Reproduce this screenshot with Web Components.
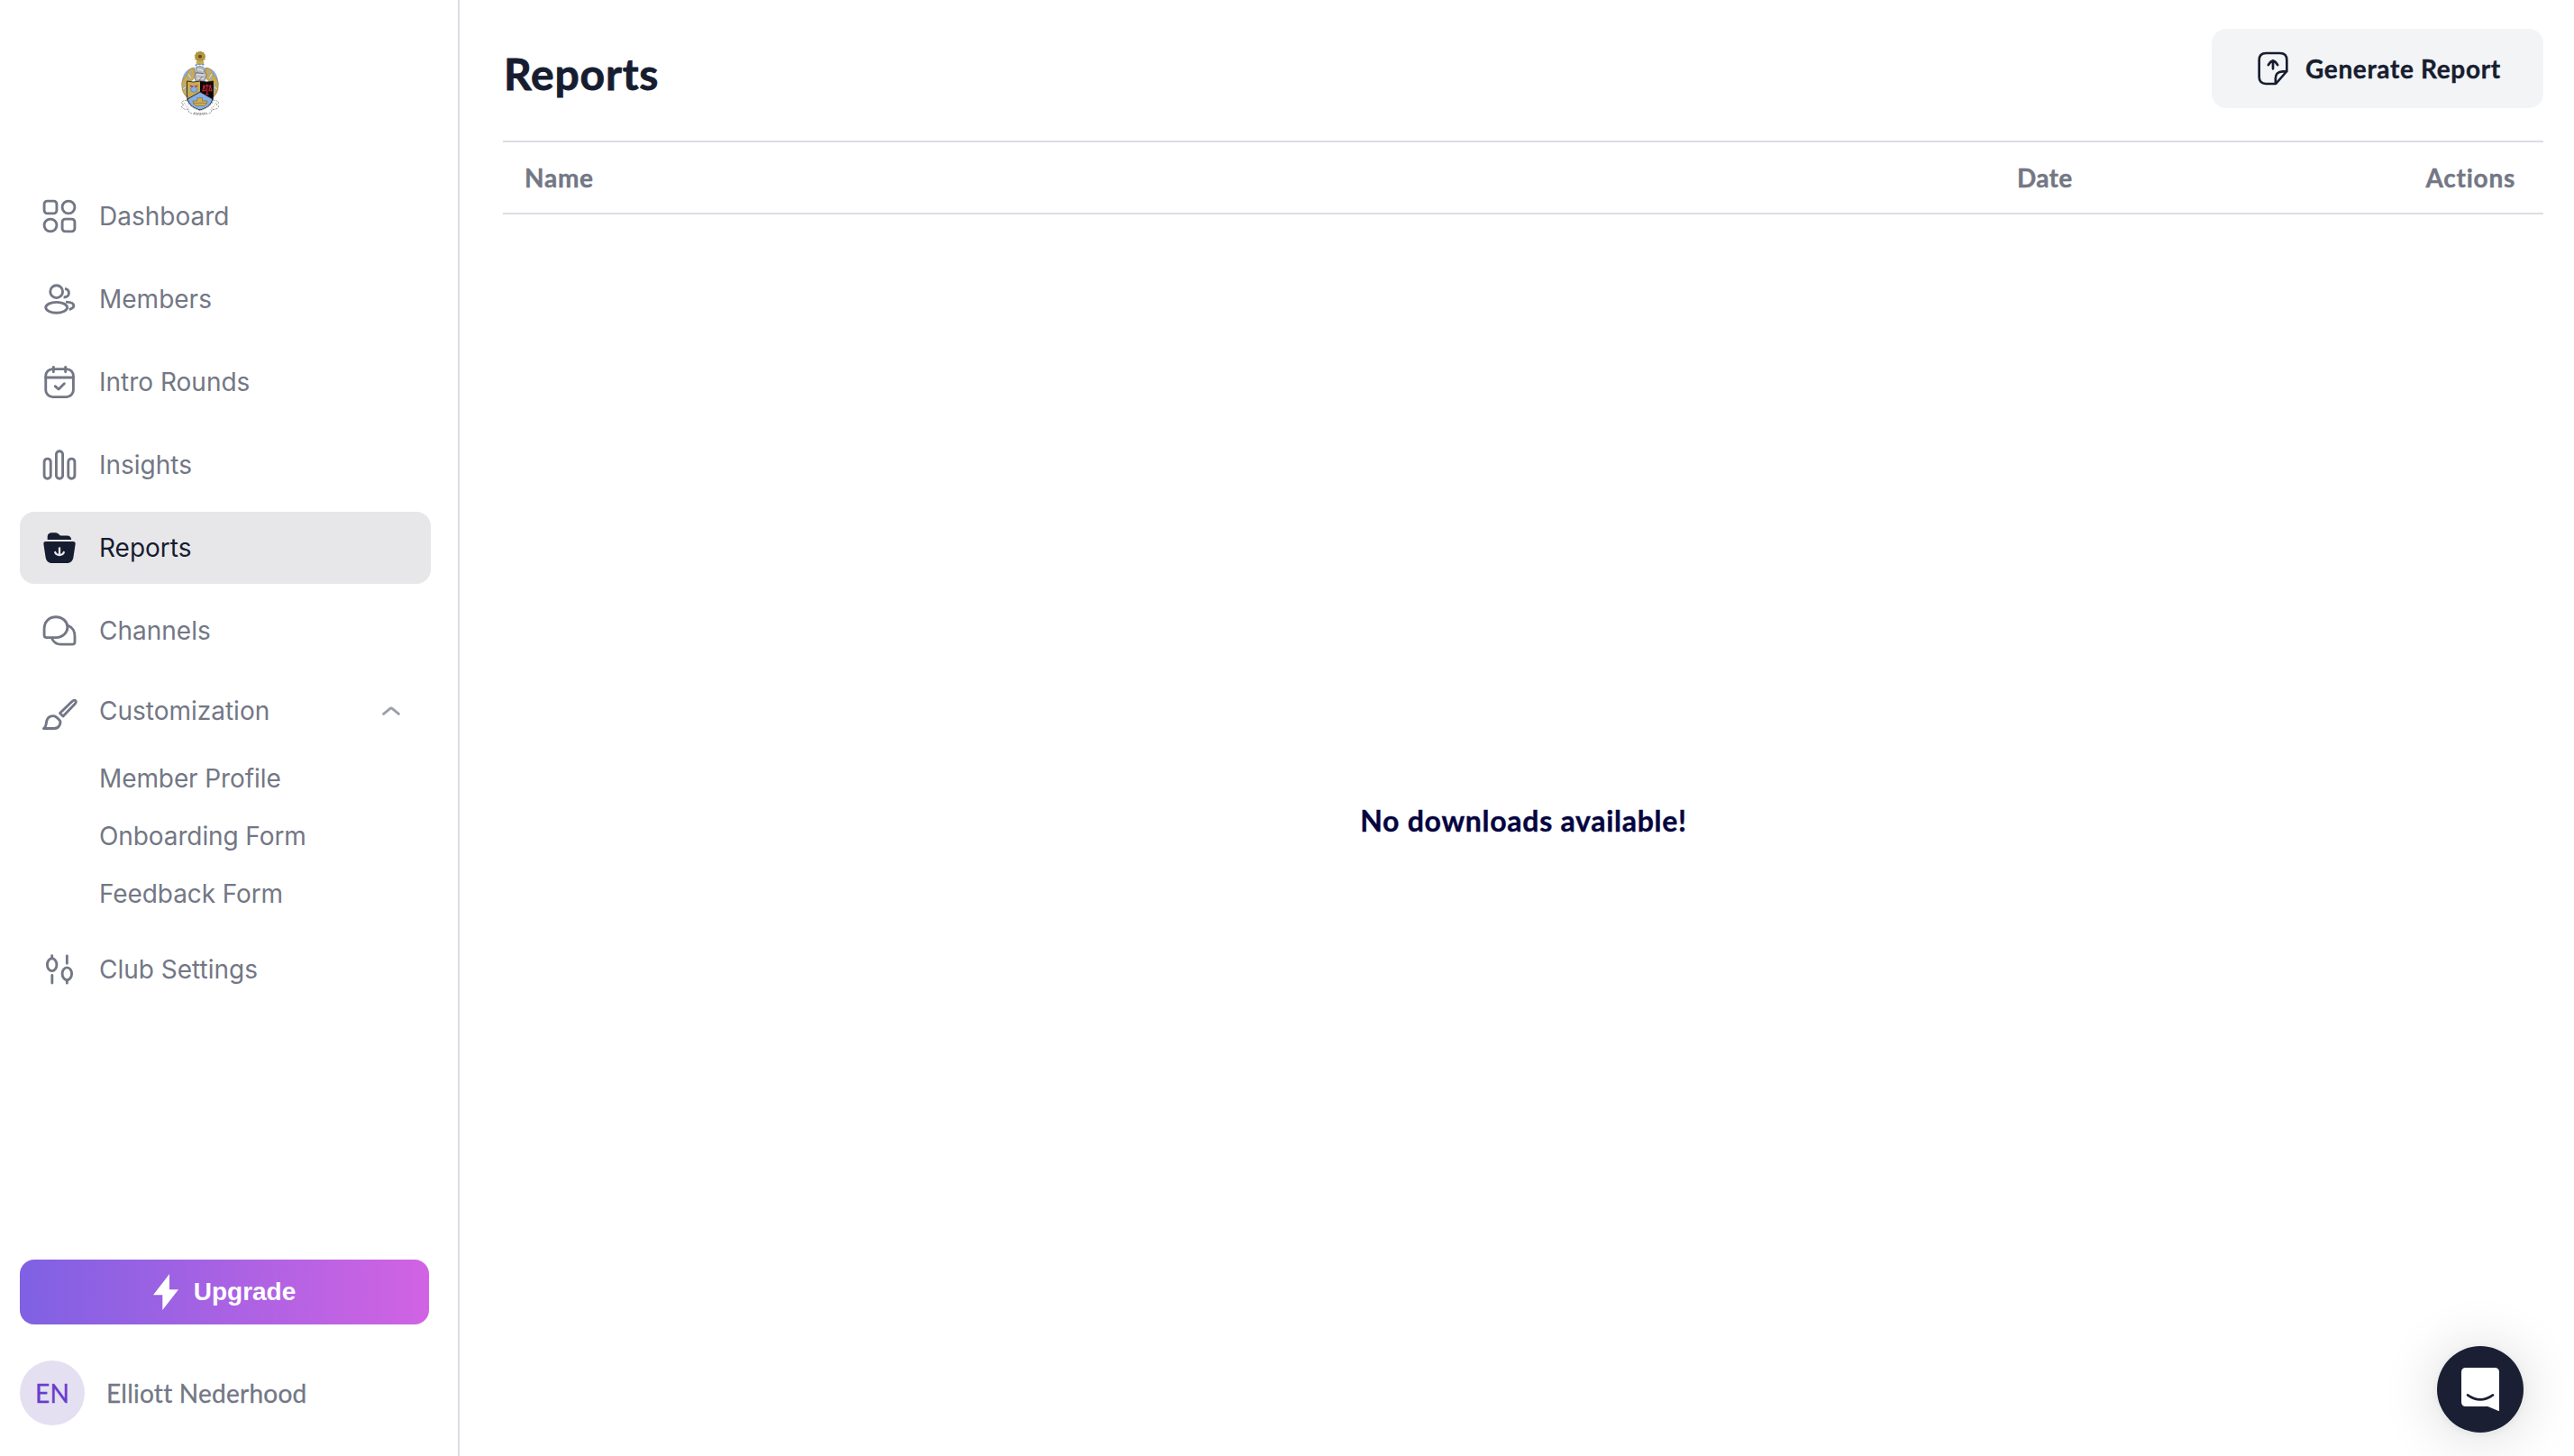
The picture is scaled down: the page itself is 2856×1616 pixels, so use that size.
<!DOCTYPE html>
<html lang="en">
<head>
<meta charset="utf-8">
<title>Reports</title>
<style>
  html, body { margin: 0; height: 100%; background: #fff; }
  body { font-family: Inter, sans-serif; font-size: 28px; color: #737785; overflow: hidden; }
</style>
</head>
<body>
<app-shell>
  <side-bar slot="sidebar">
    <club-crest slot="logo"></club-crest>
    <nav-item icon="dashboard">Dashboard</nav-item>
    <nav-item icon="members">Members</nav-item>
    <nav-item icon="calendar">Intro Rounds</nav-item>
    <nav-item icon="insights">Insights</nav-item>
    <nav-item icon="reports" active>Reports</nav-item>
    <nav-item icon="channels">Channels</nav-item>
    <nav-group icon="brush" label="Customization">
      <sub-item>Member Profile</sub-item>
      <sub-item>Onboarding Form</sub-item>
      <sub-item>Feedback Form</sub-item>
    </nav-group>
    <nav-item icon="settings">Club Settings</nav-item>
    <upgrade-button slot="footer">Upgrade</upgrade-button>
    <user-chip slot="footer" initials="EN">Elliott Nederhood</user-chip>
  </side-bar>
  <page-header slot="main" heading="Reports">
    <action-button>Generate Report</action-button>
  </page-header>
  <report-table slot="main">No downloads available!</report-table>
</app-shell>
<chat-launcher></chat-launcher>

<script>
const define = (name, html, setup) => {
  const tpl = document.createElement('template');
  tpl.innerHTML = html;
  customElements.define(name, class extends HTMLElement {
    constructor() {
      super();
      this.attachShadow({ mode: 'open' }).append(tpl.content.cloneNode(true));
    }
    connectedCallback() { if (setup) setup(this, this.shadowRoot); }
  });
};

const ICONS = {
  dashboard: `<rect x="1.85" y="1.85" width="8.3" height="8.3" rx="2"/><circle cx="18" cy="6" r="4.15"/><circle cx="6" cy="18" r="4.15"/><rect x="13.85" y="13.85" width="8.3" height="8.3" rx="2"/>`,
  members: `<circle cx="10" cy="7" r="4.15"/><ellipse cx="10" cy="17.6" rx="7.15" ry="3.55"/><path stroke-linecap="butt" d="M15.6 5c1.7.3 2.65 1.5 2.65 3s-1.2 2.8-3.5 2.8M16.2 13.9c3.2.1 5.3 1 5.3 2.4 0 1.1-1 1.9-3 2.7"/>`,
  calendar: `<rect x="2.85" y="3.35" width="18.4" height="18.6" rx="4.6"/><path d="M8 2v3.3M16 2v3.3M2.85 9h18.4M9.1 14.8l2.3 2 3.8-3.8"/>`,
  insights: `<rect x="1.85" y="7.85" width="4.3" height="13.3" rx="2.15"/><rect x="9.85" y="2.85" width="4.3" height="18.3" rx="2.15"/><rect x="17.85" y="7.85" width="4.3" height="13.3" rx="2.15"/>`,
  reports: `<path fill="currentColor" stroke="none" d="M4 6.6V4.6C4 2.9 5.1 1.9 6.9 1.9h2.3c1.2 0 1.9.4 2.6 1.2.5.6.8.8 1.6.8h3.7c1.7 0 2.7 1 2.8 2.7ZM2.9 7.8h18.2c1 0 1.6.6 1.5 1.6l-1.3 8.6c-.4 2.8-1.9 4.2-4.4 4.2H7.1c-2.5 0-4-1.4-4.4-4.2L1.4 9.4c-.1-1 .5-1.6 1.5-1.6Z"/><path stroke="#e7e7e9" stroke-width="1.4" d="M12 12.2v4.6M9.1 15c.4 1.2 1.5 1.8 2.9 1.8s2.5-.6 2.9-1.8"/>`,
  channels: `<path d="M1.85 10.7c0-4.6 3.1-7.85 7.8-7.85 4.4 0 7.7 3.2 7.7 6.8s-3.1 6.9-7.6 6.9H3.4c-.9 0-1.55-.7-1.55-1.6ZM18 8.7c2.6 1.1 4.2 3.6 4.2 7.2v3.6c0 .9-.7 1.6-1.6 1.6h-7.8c-2.5 0-4.7-1.4-5.9-4"/>`,
  brush: `<path d="M12.3 11.1l7.9-7.6c1-.9 2-1.2 2.5-.7.5.5.2 1.5-.7 2.5l-7.6 7.9ZM1.4 21.3c1.4-.5 1.6-2 1.8-3.6.3-2.6 1.3-4.2 3.3-4.6 1-.2 2.2-.2 3 .4.9.6 1.9 1.5 2.7 2.5.9 1.1-.1 5.3-3.6 5.3Z"/>`,
  settings: `<ellipse cx="7" cy="8.8" rx="3.15" ry="4.15"/><path d="M7 2.8v1.5M7.1 15.9v5.1M17 2.9v5.1M17 19.3v1.8"/><ellipse cx="17" cy="14.9" rx="3.15" ry="4.15"/>`,
  generate: `<path stroke-width="1.6" d="M13.9 22.2H7.3c-3 0-4.5-1.8-4.5-4.5V6.3C2.8 3.5 4.3 1.8 7.3 1.8h9.4c3 0 4.5 1.8 4.5 4.5v7.5ZM21.2 14h-2.9c-3 0-4.6 1.9-4.6 4.6v3.6M12 12.2V7M8.9 9.7c.9-1.6 1.9-2.6 3.1-2.9 1.2.3 2.2 1.3 3.1 2.9"/>`
};

define('ui-icon', `
  <style>
    :host { display: block; flex: none; width: 40px; height: 40px; }
    svg { display: block; width: 100%; height: 100%; fill: none; stroke: currentColor; stroke-width: 1.72; stroke-linecap: round; stroke-linejoin: round; overflow: visible; }
  </style>
  <svg viewBox="0 0 24 24"></svg>`,
  (el, root) => { root.querySelector('svg').innerHTML = ICONS[el.getAttribute('name')] || ''; });

define('club-crest', `
  <style>
    :host { display: block; width: 46px; height: 73.33px; }
    svg { display: block; width: 100%; height: 100%; }
  </style>
  <svg viewBox="60 45 130 220" preserveAspectRatio="none">
    <path fill="#e8ddb4" d="M116 84l-10-6 5-7-6-6 7-5-1-8 8 1 6-5 6 5 8-1-1 8 7 5-6 6 5 7-10 6z"/>
    <circle cx="125" cy="68" r="15" fill="#b59a3c" stroke="#7d6a2a" stroke-width="3" stroke-dasharray="4 3"/>
    <circle cx="125" cy="68" r="6" fill="#5f4f1e"/>
    <path fill="#86aee9" d="M108 104c-22 2-38 20-40 48-1 20 3 38 14 52l10 4V150l22-20zM142 104c22 2 38 20 40 48 1 20-3 38-14 52l-10 4V150l-22-20z"/>
    <g fill="#c9ab55" stroke="#8d7a3c" stroke-width="1.5">
      <path d="M106 106c-18 4-22 12-22 24-12 8-18 22-16 36 0 16 6 30 16 36l4-14c-8-10-6-22 2-32 6-8 14-8 20-22z"/>
      <path d="M144 106c18 4 22 12 22 24 12 8 18 22 16 36 0 16-6 30-16 36l-4-14c8-10 6-22-2-32-6-8-14-8-20-22z"/>
    </g>
    <path fill="none" stroke="#86aee9" stroke-width="3" d="M96 116c-2 12 0 20-8 30M154 116c2 12 0 20 8 30M76 158c0 12 2 20 8 28M174 158c0 12-2 20-8 28"/>
    <path fill="none" stroke="#fff" stroke-width="2" d="M88 126l8 14M162 126l-8 14M72 176l8-6M178 176l-8-6"/>
    <path fill="#c9ab55" d="M113 84h24v12h-24z"/>
    <path fill="none" stroke="#5c8fe0" stroke-width="5" stroke-dasharray="6 5" d="M110 98q15-8 32 0"/>
    <path fill="#b7b9bd" stroke="#66686e" stroke-width="2" d="M112 104q16-8 28 4l-2 12 8 8-6 20-14 6-16-6-2-18 6-10z"/>
    <path fill="none" stroke="#efeff1" stroke-width="3" d="M116 112q12-3 18 6M114 128l24 2M116 140l20 2"/>
    <path fill="none" stroke="#4c4e55" stroke-width="2" d="M112 122l24 3M122 148l10-14"/>
    <path fill="#c9ab55" d="M84 150q20 6 41 0v38l-41 24z"/>
    <path fill="#0a0809" d="M125 150q21 6 41 0v62l-41-26z"/>
    <path fill="#86aee9" d="M125 186l41 24q-6 24-41 36-35-12-41-36z"/>
    <path fill="none" stroke="#16140f" stroke-width="2.5" d="M84 150q20 6 41 0 21 6 41 0v42c0 34-16 46-41 54-25-8-41-20-41-54zM84 211l41-25 41 25"/>
    <circle cx="106" cy="177" r="10" fill="#86aee9" stroke="#5279bc" stroke-width="2"/>
    <path stroke="#c22334" stroke-width="4" d="M94 165l8 4M117 165l-8 4"/>
    <path fill="none" stroke="#cf2338" stroke-width="3" d="M134 166h27M147 160v36M137 166l-4 16h9zM157 166l-4 16h9zM142 194h10"/>
    <path fill="#d2b04d" stroke="#6c5a22" stroke-width="1.5" d="M102 216h14v-10h16v10h16q-2 14-10 16h-26q-8-2-10-16z"/>
    <path stroke="#6c5a22" stroke-width="1.5" d="M104 223h42"/>
    <path fill="#fff" stroke="#6f6f73" stroke-width="2" stroke-dasharray="7 3" d="M84 214q-14 0-18 8l8 6-8 6q6 12 22 10l2 10q14 8 35 8t35-8l2-10q16 2 22-10l-8-6 8-6q-4-8-18-8-4 22-41 34-37-12-41-34z"/>
    <path fill="none" stroke="#55565a" stroke-width="4" stroke-dasharray="3 3" d="M106 256q19 4 38 0"/>
    <path fill="none" stroke="#a9a9ad" stroke-width="3" stroke-dasharray="3 4" d="M76 222q4 14 18 22M174 222q-4 14-18 22"/>
  </svg>`);

define('app-shell', `
  <style>
    :host { display: flex; height: 100vh; }
    main { flex: 1; min-width: 0; display: flex; flex-direction: column; padding: 0 34px 32px 48px; box-sizing: border-box; }
  </style>
  <slot name="sidebar"></slot>
  <main><slot name="main"></slot></main>`);

define('side-bar', `
  <style>
    :host { display: flex; flex-direction: column; flex: none; width: 510px; height: 100%; box-sizing: border-box; border-right: 2px solid #dcdce4; padding: 0 30px 34px 22px; }
    header { height: 200px; box-sizing: border-box; padding: 55px 0 0 176.5px; }
    nav { flex: 1; display: flex; flex-direction: column; gap: 12px; }
    footer { display: flex; flex-direction: column; gap: 40px; }
  </style>
  <header><slot name="logo"></slot></header>
  <nav><slot></slot></nav>
  <footer><slot name="footer"></slot></footer>`);

define('nav-item', `
  <style>
    :host { display: flex; align-items: center; gap: 24px; height: 80px; box-sizing: border-box; padding: 0 24px; border-radius: 16px; line-height: 40px; }
    :host([active]) { background: #e7e7e9; color: #171d30; }
  </style>
  <ui-icon></ui-icon><span><slot></slot></span>`,
  (el, root) => {
    const old = root.querySelector('ui-icon');
    const icon = document.createElement('ui-icon');
    icon.setAttribute('name', el.getAttribute('icon'));
    old.replaceWith(icon);
  });

define('nav-group', `
  <style>
    :host { display: block; margin-top: -6px; }
    .row { display: flex; align-items: center; gap: 24px; height: 86px; padding: 0 34px 0 24px; line-height: 40px; }
    .icon { padding-top: 8px; }
    .label { flex: 1; }
    .chevron { display: block; width: 20px; height: 12px; fill: none; stroke: #9c9eaa; stroke-width: 2.8; stroke-linecap: round; stroke-linejoin: round; }
  </style>
  <div class="row"><div class="icon"></div><span class="label"></span>
    <svg class="chevron" viewBox="0 0 20 12"><path d="M1.6 9.4 8.6 3.6q1.4-1.1 2.8 0l7 5.8"/></svg></div>
  <slot></slot>`,
  (el, root) => {
    const icon = document.createElement('ui-icon');
    icon.setAttribute('name', el.getAttribute('icon'));
    root.querySelector('.icon').replaceChildren(icon);
    root.querySelector('.label').textContent = el.getAttribute('label');
  });

define('sub-item', `
  <style>:host { display: block; height: 64px; line-height: 64px; padding-left: 88px; letter-spacing: -.1px; }</style>
  <slot></slot>`);

define('upgrade-button', `
  <style>
    :host { display: flex; align-items: center; justify-content: center; gap: 17px; width: 454px; height: 72px; border-radius: 16px; background: linear-gradient(90deg, #7f61e3, #d163e3); color: #fff; font: 700 28px/36px "Liberation Sans", Arial, sans-serif; }
    svg { display: block; width: 28px; height: 40px; }
  </style>
  <svg viewBox="0 0 28 40"><path fill="#fff" d="M18 0v17.2h10L10.3 40V23.2H0z"/></svg>
  <span><slot></slot></span>`);

define('user-chip', `
  <style>
    :host { display: flex; align-items: center; gap: 24px; font: 400 28px/36px Lato, sans-serif; letter-spacing: .25px; color: #737785; -webkit-text-stroke: .3px currentColor; }
    .avatar { display: flex; align-items: center; justify-content: center; width: 72px; height: 72px; border-radius: 50%; background: #e4dff1; color: #673ecb; }
  </style>
  <div class="avatar"></div><span><slot></slot></span>`,
  (el, root) => { root.querySelector('.avatar').textContent = el.getAttribute('initials'); });

define('page-header', `
  <style>
    :host { display: flex; justify-content: space-between; align-items: flex-start; height: 156px; box-sizing: border-box; padding-top: 32px; flex: none; }
    h1 { margin: 20px 0 0 1px; font: 700 48px/60px Lato, sans-serif; letter-spacing: .8px; color: #171d30; -webkit-text-stroke: .8px currentColor; }
  </style>
  <h1></h1><slot></slot>`,
  (el, root) => { root.querySelector('h1').textContent = el.getAttribute('heading'); });

define('action-button', `
  <style>
    :host { display: flex; align-items: center; gap: 16px; width: 368px; height: 88px; box-sizing: border-box; padding-left: 48px; border-radius: 16px; background: #f3f4f6; color: #171d30; font: 700 28px/36px Lato, sans-serif; letter-spacing: .65px; white-space: nowrap; }
    span { -webkit-text-stroke: .4px currentColor; }
  </style>
  <ui-icon name="generate"></ui-icon><span><slot></slot></span>`);

define('report-table', `
  <style>
    :host { flex: 1; display: flex; flex-direction: column; font: 700 28px/36px Lato, sans-serif; -webkit-text-stroke: .4px currentColor; }
    .head { display: grid; grid-template-columns: 1fr 433px 120px; align-items: center; height: 78px; padding: 0 31px 0 24px; border: solid #dcdce4; border-width: 2px 0; letter-spacing: .75px; color: #737785; }
    .head :nth-child(2) { letter-spacing: .3px; }
    .head :last-child { text-align: right; }
    .empty { flex: 1; display: flex; align-items: center; justify-content: center; padding-left: 1px; font-size: 32px; line-height: 40px; letter-spacing: .72px; color: #05053f; }
  </style>
  <div class="head"><span>Name</span><span>Date</span><span>Actions</span></div>
  <div class="empty"><span><slot></slot></span></div>`);

define('chat-launcher', `
  <style>
    :host { position: fixed; right: 56px; bottom: 26px; width: 96px; height: 96px; border-radius: 50%; background: #1a1f33; box-shadow: 0 2px 12px rgba(0,0,0,.06), 0 4px 64px rgba(0,0,0,.16); display: flex; align-items: center; justify-content: center; }
    svg { display: block; width: 42px; height: 48.3px; }
  </style>
  <svg viewBox="0 0 126 145"><path fill="#fff" d="M15 0h96q15 0 15 15v130l-38-16H15q-15 0-15-15V15Q0 0 15 0z"/><path fill="none" stroke="#1a1f33" stroke-width="8" stroke-linecap="round" d="M21 91q42 30 84 0"/></svg>`);
</script>
</body>
</html>
